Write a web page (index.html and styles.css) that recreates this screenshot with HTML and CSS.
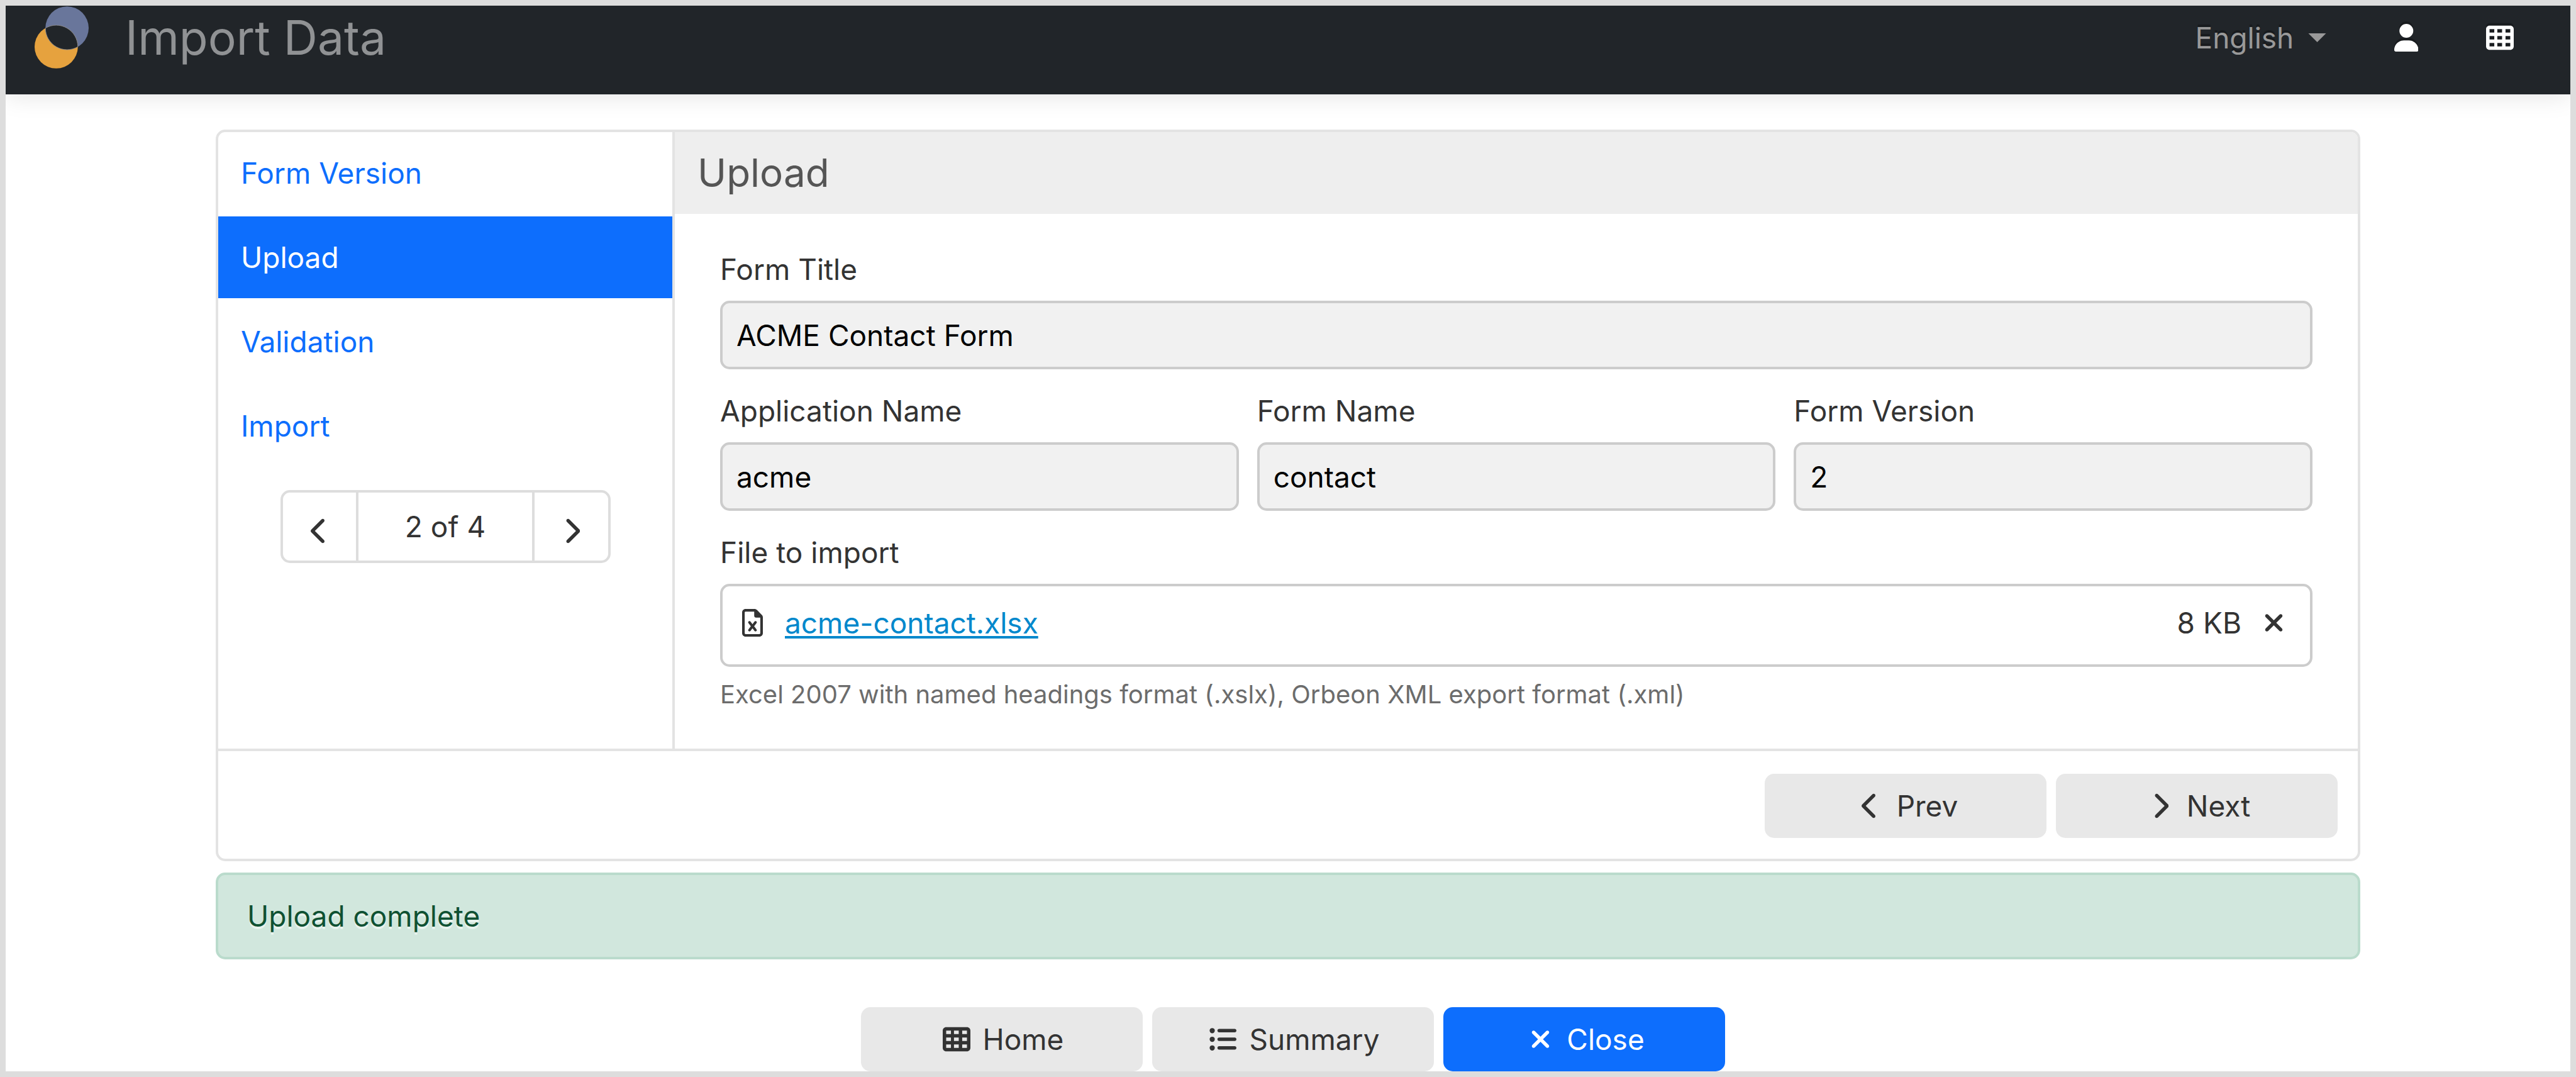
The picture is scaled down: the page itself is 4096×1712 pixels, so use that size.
FILE: index.html
```html
<!DOCTYPE html>
<html lang="en">
<head>
<meta charset="utf-8">
<title>Import Data</title>
<link rel="stylesheet" href="styles.css">
</head>
<body>
<svg class="sprite" aria-hidden="true">
  <symbol id="i-left" viewBox="0 0 320 512"><path d="M9.4 233.4c-12.5 12.5-12.5 32.8 0 45.3l192 192c12.5 12.5 32.8 12.5 45.3 0s12.5-32.8 0-45.3L77.3 256 246.6 86.6c12.5-12.5 12.5-32.8 0-45.3s-32.8-12.5-45.3 0l-192 192z"/></symbol>
  <symbol id="i-right" viewBox="0 0 320 512"><path d="M310.6 233.4c12.5 12.5 12.5 32.8 0 45.3l-192 192c-12.5 12.5-32.8 12.5-45.3 0s-12.5-32.8 0-45.3L242.7 256 73.4 86.6c-12.5-12.5-12.5-32.8 0-45.3s32.8-12.5 45.3 0l192 192z"/></symbol>
  <symbol id="i-user" viewBox="0 0 448 512"><path d="M224 256A128 128 0 1 0 224 0a128 128 0 1 0 0 256zm-45.7 48C79.8 304 0 383.8 0 482.3C0 498.7 13.3 512 29.7 512H418.3c16.4 0 29.7-13.3 29.7-29.7C448 383.8 368.2 304 269.7 304H178.3z"/></symbol>
  <symbol id="i-cells" viewBox="0 0 512 512"><path fill-rule="evenodd" d="M64 32C28.7 32 0 60.7 0 96V416c0 35.3 28.7 64 64 64H448c35.3 0 64-28.7 64-64V96c0-35.3-28.7-64-64-64H64zM152 96v64H64V96h88zm56 0h88v64H208V96zm240 0v64H360V96h88zM64 224h88v64H64V224zm232 0v64H208V224h88zm64 0h88v64H360V224zM152 352v64H64V352h88zm56 0h88v64H208V352zm240 0v64H360V352h88z"/></symbol>
  <symbol id="i-list" viewBox="0 0 512 512"><path d="M64 144a48 48 0 1 0 0-96 48 48 0 1 0 0 96zM192 64c-17.7 0-32 14.3-32 32s14.3 32 32 32H480c17.7 0 32-14.3 32-32s-14.3-32-32-32H192zm0 160c-17.7 0-32 14.3-32 32s14.3 32 32 32H480c17.7 0 32-14.3 32-32s-14.3-32-32-32H192zm0 160c-17.7 0-32 14.3-32 32s14.3 32 32 32H480c17.7 0 32-14.3 32-32s-14.3-32-32-32H192zM64 464a48 48 0 1 0 0-96 48 48 0 1 0 0 96zm48-208a48 48 0 1 0 -96 0 48 48 0 1 0 96 0z"/></symbol>
  <symbol id="i-close" viewBox="0 0 384 512"><path d="M342.6 150.6c12.5-12.5 12.5-32.8 0-45.3s-32.8-12.5-45.3 0L192 210.7 86.6 105.4c-12.5-12.5-32.8-12.5-45.3 0s-12.5 32.8 0 45.3L146.7 256 41.4 361.4c-12.5 12.5-12.5 32.8 0 45.3s32.8 12.5 45.3 0L192 301.3 297.4 406.6c12.5 12.5 32.8 12.5 45.3 0s12.5-32.8 0-45.3L237.3 256 342.6 150.6z"/></symbol>
  <symbol id="i-excel" viewBox="0 0 384 512"><path fill-rule="evenodd" d="M48 448V64c0-8.8 7.2-16 16-16H224v80c0 17.7 14.3 32 32 32h80V448c0 8.8-7.2 16-16 16H64c-8.8 0-16-7.2-16-16zM64 0C28.7 0 0 28.7 0 64V448c0 35.3 28.7 64 64 64H320c35.3 0 64-28.7 64-64V154.5c0-17-6.7-33.3-18.7-45.3L274.7 18.7C262.7 6.7 246.5 0 229.5 0H64zm90.9 233.3c-8.1-10.5-23.2-12.3-33.7-4.2s-12.3 23.2-4.2 33.7L161.6 320l-44.5 57.3c-8.1 10.5-6.3 25.5 4.2 33.7s25.5 6.3 33.7-4.2L192 359.1l37.1 47.6c8.1 10.5 23.2 12.3 33.7 4.2s12.3-23.2 4.2-33.7L222.4 320l44.5-57.3c8.1-10.5 6.3-25.5-4.2-33.7s-25.5-6.3-33.7 4.2L192 280.9l-37.1-47.6z"/></symbol>
</svg>

<div class="frame">
  <header class="navbar">
    <svg class="logo" viewBox="0 0 95 109" aria-hidden="true">
      <circle cx="57" cy="38" r="38" fill="#69769b"/>
      <circle cx="38" cy="71" r="38" fill="#e6a23e"/>
      <path d="M19 38.100A38 38 0 0 1 76 70.900A38 38 0 0 1 19 38.100z" fill="#212529" stroke="#8a8c92" stroke-width="1"/>
    </svg>
    <h1 class="navbar-title">Import Data</h1>
    <label class="language">
      <select class="language-select" aria-label="Language"><option>English</option></select>
      <svg class="caret" viewBox="0 0 8 4" aria-hidden="true"><path d="M0 0h8L4 4z"/></svg>
    </label>
    <a class="navbar-link" href="#user" aria-label="User"><svg class="icon" viewBox="0 0 448 512"><use href="#i-user"/></svg></a>
    <a class="navbar-link" href="#apps" aria-label="Forms"><svg class="icon" viewBox="0 0 512 512"><use href="#i-cells"/></svg></a>
  </header>

  <main class="main">
    <section class="wizard">
      <div class="wizard-body">
        <aside class="sidebar">
          <nav class="steps" aria-label="Steps">
            <a class="step" href="#form-version">Form Version</a>
            <a class="step step-active" href="#upload" aria-current="step">Upload</a>
            <a class="step" href="#validation">Validation</a>
            <a class="step" href="#import">Import</a>
          </nav>
          <div class="pager">
            <button class="pager-button" type="button" aria-label="Previous page"><svg class="icon" viewBox="0 0 320 512"><use href="#i-left"/></svg></button>
            <span class="pager-status">2 of 4</span>
            <button class="pager-button" type="button" aria-label="Next page"><svg class="icon" viewBox="0 0 320 512"><use href="#i-right"/></svg></button>
          </div>
        </aside>
        <div class="content">
          <h2 class="content-title">Upload</h2>
          <form class="form">
            <div class="field field-wide">
              <label class="label" for="title">Form Title</label>
              <input class="input" id="title" type="text" value="ACME Contact Form" readonly>
            </div>
            <div class="field">
              <label class="label" for="app">Application Name</label>
              <input class="input" id="app" type="text" value="acme" readonly>
            </div>
            <div class="field">
              <label class="label" for="form">Form Name</label>
              <input class="input" id="form" type="text" value="contact" readonly>
            </div>
            <div class="field">
              <label class="label" for="version">Form Version</label>
              <input class="input" id="version" type="text" value="2" readonly>
            </div>
            <div class="field field-wide">
              <span class="label" id="file-label">File to import</span>
              <div class="file" role="group" aria-labelledby="file-label">
                <span class="icon-box"><svg class="icon" viewBox="0 0 384 512"><use href="#i-excel"/></svg></span>
                <a class="file-link" href="#file">acme-contact.xlsx</a>
                <span class="file-size">8 KB</span>
                <button class="file-remove icon-box" type="button" aria-label="Remove file"><svg class="icon" viewBox="0 0 384 512"><use href="#i-close"/></svg></button>
              </div>
              <p class="help">Excel 2007 with named headings format (.xslx), Orbeon XML export format (.xml)</p>
            </div>
          </form>
        </div>
      </div>
      <footer class="wizard-footer">
        <button class="button" type="button"><span class="icon-box"><svg class="icon" viewBox="0 0 320 512"><use href="#i-left"/></svg></span>Prev</button>
        <button class="button" type="button"><span class="icon-box"><svg class="icon" viewBox="0 0 320 512"><use href="#i-right"/></svg></span>Next</button>
      </footer>
    </section>

    <div class="alert" role="status">Upload complete</div>

    <div class="actions">
      <button class="button" type="button"><span class="icon-box"><svg class="icon" viewBox="0 0 512 512"><use href="#i-cells"/></svg></span>Home</button>
      <button class="button" type="button"><span class="icon-box"><svg class="icon" viewBox="0 0 512 512"><use href="#i-list"/></svg></span>Summary</button>
      <button class="button button-primary" type="button"><span class="icon-box"><svg class="icon" viewBox="0 0 384 512"><use href="#i-close"/></svg></span>Close</button>
    </div>
  </main>
</div>
</body>
</html>
```

FILE: styles.css
```css
* {
  box-sizing: border-box;
}

body {
  margin: 0;
  background: #fff;
  color: #333;
  font-family: Inter, "Liberation Sans", sans-serif;
  font-size: 46px;
  line-height: 64px;
}

button,
input,
select {
  margin: 0;
  padding: 0;
  border: 0;
  color: inherit;
  font: inherit;
}

a {
  color: inherit;
  text-decoration: none;
}

.sprite {
  display: none;
}

.icon {
  display: block;
  height: 44px;
  fill: currentColor;
}

.icon-box {
  display: flex;
  flex: none;
  justify-content: center;
  width: 54px;
}

.frame {
  min-height: 100vh;
  border: 9px solid #ddd;
  overflow: hidden;
}

/* Top bar */

.navbar {
  display: flex;
  align-items: center;
  height: 141px;
  padding: 0 90px 40px 46px;
  background: #212529;
  box-shadow: 0 4px 36px rgba(0, 0, 0, 0.1);
}

.logo {
  width: 86px;
  height: 99px;
}

.navbar-title {
  margin: 0 auto 0 58px;
  color: #909294;
  font-size: 75px;
  font-weight: 400;
  line-height: 100px;
}

.language {
  display: flex;
  align-items: center;
  gap: 22px;
  color: #999;
}

.language-select {
  appearance: none;
  background: none;
  text-shadow: 0 -4px 0 rgba(0, 0, 0, 0.25);
}

.caret {
  width: 29px;
  height: 14px;
  fill: currentColor;
}

.navbar-link {
  margin-left: 108px;
  color: #fff;
  filter: drop-shadow(0 -4px 0 rgba(0, 0, 0, 0.25));
}

/* Wizard */

.main {
  padding: 56px 334px 0;
}

.wizard {
  border: 4px solid #e3e3e3;
  border-radius: 15px;
  overflow: hidden;
}

.wizard-body {
  display: flex;
}

.sidebar {
  flex: none;
  width: 726px;
  border-right: 4px solid #e3e3e3;
}

.steps {
  display: flex;
  flex-direction: column;
  gap: 4px;
}

.step {
  padding: 33px 36px;
  color: #0d6efd;
}

.step-active {
  background: #0d6efd;
  color: #fff;
}

.pager {
  display: flex;
  width: 525px;
  height: 116px;
  margin: 37px auto 0;
  border: 4px solid #ddd;
  border-radius: 15px;
}

.pager-button {
  display: flex;
  flex: 1;
  align-items: center;
  justify-content: center;
  padding-top: 14px;
  background: none;
}

.pager-status {
  width: 284px;
  border: solid #ddd;
  border-width: 0 4px;
  line-height: 108px;
  text-align: center;
}

.content {
  flex: 1;
}

.content-title {
  margin: 0;
  padding: 0 36px;
  background: #eee;
  color: #555;
  font-size: 62px;
  font-weight: 400;
  line-height: 130px;
}

.form {
  display: grid;
  grid-template-columns: repeat(3, 1fr);
  gap: 34px 29px;
  padding: 56px 72px;
}

.field-wide {
  grid-column: 1 / -1;
}

.label {
  display: block;
  margin-bottom: 18px;
}

.input {
  display: block;
  width: 100%;
  height: 109px;
  padding: 0 22px;
  border: 4px solid #ccc;
  border-radius: 15px;
  background: #f1f1f1;
  color: #000;
}

.file {
  display: flex;
  align-items: center;
  height: 132px;
  padding: 0 31px 8px 20px;
  border: 4px solid #ccc;
  border-radius: 15px;
}

.file-link {
  margin: 0 auto 0 25px;
  color: #08c;
  text-decoration: underline;
  text-decoration-thickness: 4px;
  text-underline-offset: 4px;
}

.file-remove {
  margin-left: 24px;
  background: none;
}

.help {
  margin: 14px 0 0;
  color: #6c6c6c;
  font-size: 40px;
  line-height: 60px;
}

.wizard-footer {
  display: flex;
  justify-content: flex-end;
  gap: 15px;
  padding: 36px 32px 33px;
  border-top: 4px solid #e3e3e3;
}

.button {
  display: flex;
  align-items: center;
  justify-content: center;
  gap: 15px;
  width: 448px;
  height: 102px;
  border-radius: 15px;
  background: #e8e8e8;
}

.button-primary {
  background: #0d6efd;
  color: #fff;
}

/* Status and page actions */

.alert {
  margin-top: 18px;
  padding: 33px 46px;
  border: 4px solid #badbcc;
  border-radius: 15px;
  background: #d1e7dd;
  color: #0f5132;
  text-shadow: 0 4px 0 rgba(255, 255, 255, 0.5);
}

.actions {
  display: flex;
  justify-content: center;
  margin-top: 76px;
}

.actions .button {
  margin-left: 15px;
}
```
